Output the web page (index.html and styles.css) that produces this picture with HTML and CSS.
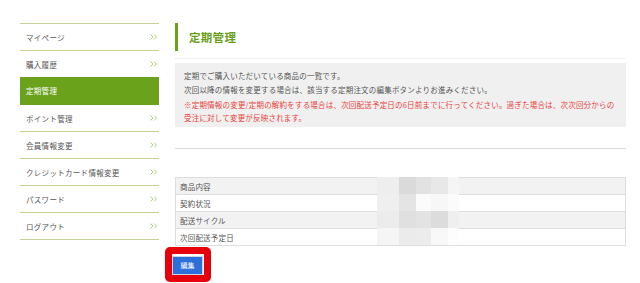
FILE: index.html
```html
<!DOCTYPE html>
<html lang="ja">
<head>
<meta charset="utf-8">
<title>定期管理</title>
<link rel="stylesheet" href="styles.css">
</head>
<body>
<div class="page">
  <nav class="side">
    <ul class="side-list">
      <li class="side-item"><span>マイページ</span><svg class="chev" viewBox="0 0 8 6" width="8" height="6"><path d="M0.5 0.5 L3 3 L0.5 5.5 M4 0.5 L6.5 3 L4 5.5" fill="none" stroke="#9cc35a" stroke-width="0.8"/></svg></li>
      <li class="side-item"><span>購入履歴</span><svg class="chev" viewBox="0 0 8 6" width="8" height="6"><path d="M0.5 0.5 L3 3 L0.5 5.5 M4 0.5 L6.5 3 L4 5.5" fill="none" stroke="#9cc35a" stroke-width="0.8"/></svg></li>
      <li class="side-item active"><span>定期管理</span></li>
      <li class="side-item"><span>ポイント管理</span><svg class="chev" viewBox="0 0 8 6" width="8" height="6"><path d="M0.5 0.5 L3 3 L0.5 5.5 M4 0.5 L6.5 3 L4 5.5" fill="none" stroke="#9cc35a" stroke-width="0.8"/></svg></li>
      <li class="side-item"><span>会員情報変更</span><svg class="chev" viewBox="0 0 8 6" width="8" height="6"><path d="M0.5 0.5 L3 3 L0.5 5.5 M4 0.5 L6.5 3 L4 5.5" fill="none" stroke="#9cc35a" stroke-width="0.8"/></svg></li>
      <li class="side-item"><span>クレジットカード情報変更</span><svg class="chev" viewBox="0 0 8 6" width="8" height="6"><path d="M0.5 0.5 L3 3 L0.5 5.5 M4 0.5 L6.5 3 L4 5.5" fill="none" stroke="#9cc35a" stroke-width="0.8"/></svg></li>
      <li class="side-item"><span>パスワード</span><svg class="chev" viewBox="0 0 8 6" width="8" height="6"><path d="M0.5 0.5 L3 3 L0.5 5.5 M4 0.5 L6.5 3 L4 5.5" fill="none" stroke="#9cc35a" stroke-width="0.8"/></svg></li>
      <li class="side-item"><span>ログアウト</span><svg class="chev" viewBox="0 0 8 6" width="8" height="6"><path d="M0.5 0.5 L3 3 L0.5 5.5 M4 0.5 L6.5 3 L4 5.5" fill="none" stroke="#9cc35a" stroke-width="0.8"/></svg></li>
    </ul>
  </nav>
  <main class="main">
    <div class="head-wrap">
      <h2 class="title">定期管理</h2>
    </div>
    <div class="notice">
      <p>定期でご購入いただいている商品の一覧です。</p>
      <p>次回以降の情報を変更する場合は、該当する定期注文の編集ボタンよりお進みください。</p>
      <p class="warn">※定期情報の変更/定期の解約をする場合は、次回配送予定日の6日前までに行ってください。過ぎた場合は、次次回分からの受注に対して変更が反映されます。</p>
    </div>
    <hr class="sep">
    <div class="table-wrap">
      <table class="info">
        <tr><td class="label">商品内容</td><td></td></tr>
        <tr><td class="label">契約状況</td><td></td></tr>
        <tr><td class="label">配送サイクル</td><td></td></tr>
        <tr><td class="label">次回配送予定日</td><td></td></tr>
      </table>
      <div class="mosaic">
        <i class="m1"></i><i class="m2"></i><i class="m3"></i><i class="m4"></i><i class="m5"></i>
        <i class="m6"></i><i class="m7"></i><i class="m8"></i><i class="m9"></i><i class="m10"></i>
        <i class="m11"></i><i class="m12"></i><i class="m13"></i><i class="m14"></i><i class="m15"></i>
        <i class="m16"></i><i class="m17"></i><i class="m18"></i><i class="m19"></i><i class="m20"></i>
      </div>
    </div>
    <div class="edit-row">
      <span class="edit-frame"><button class="edit-btn" type="button">編集</button></span>
    </div>
  </main>
</div>
</body>
</html>
```

FILE: styles.css
```css
* { box-sizing: border-box; }
html, body { margin: 0; padding: 0; background: #fff; }
body {
  font-family: "Noto Sans CJK JP", "Noto Sans", sans-serif;
  color: #555;
  font-size: 7.5px;
  overflow: hidden;
}
.page {
  display: flex;
  align-items: flex-start;
  width: 640px;
  height: 283px;
}
.side {
  width: 139px;
  margin: 23px 0 0 20px;
  flex: none;
}
.side-list {
  list-style: none;
  margin: 0;
  padding: 0;
  border-top: 1px solid #c4d29a;
}
.side-item {
  height: 27px;
  border-bottom: 1px solid #c4d29a;
  display: flex;
  align-items: center;
  justify-content: space-between;
  padding: 0 1px 0 6px;
  color: #555;
  font-size: 7.5px;
  letter-spacing: 0.3px;
}
.side-item.active {
  background: #6aa21b;
  border-bottom-color: #6aa21b;
  color: #fff;
  margin-top: -1px;
  height: 28px;
}
.chev { display: block; }
.main {
  flex: 1;
  padding: 23px 14px 0 16px;
}
.head-wrap {
  padding-bottom: 7px;
  border-bottom: 1px solid #f3f3f3;
}
.title {
  margin: 0;
  height: 28px;
  border-left: 3px solid #6aa21b;
  padding-left: 11px;
  display: flex;
  align-items: center;
  font-size: 11.5px;
  font-weight: bold;
  color: #6a9f1e;
  letter-spacing: 0.3px;
}
.notice {
  margin-top: 4px;
  background: #f0f0f0;
  padding: 6px 9px 3px 9px;
  height: 64px;
}
.notice p {
  margin: 0;
  line-height: 14px;
  letter-spacing: 0.2px;
}
.notice .warn {
  color: #e8413c;
  line-height: 13px;
  margin-top: 1px;
}
.sep {
  margin: 21px 0 0 0;
  border: 0;
  border-top: 1px solid #dcdcdc;
  height: 0;
}
.table-wrap {
  position: relative;
  margin-top: 28px;
}
.info {
  width: 100%;
  border-collapse: collapse;
}
.info td {
  height: 17px;
  padding: 0 4px;
  border-top: 1px solid #dedede;
  border-bottom: 1px solid #dedede;
  font-size: 7.5px;
  color: #555;
  letter-spacing: 0.2px;
}
.info td:first-child { border-left: 1px solid #dedede; }
.info td:last-child { border-right: 1px solid #dedede; }
.info .label { width: 202px; }
.info tr:nth-child(odd) td { background: #f2f2f2; }
.info tr:nth-child(even) td { background: #fff; }
.mosaic {
  position: absolute;
  left: 202px;
  top: 0;
  width: 82px;
  height: 68px;
  display: grid;
  grid-template-columns: 22px 17px 15px 17px 11px;
  grid-template-rows: 17px 17px 17px 17px;
}
.mosaic i { display: block; }
.m1 { background: #eeeeee; } .m2 { background: #dadada; } .m3 { background: #e2e2e2; } .m4 { background: #e8e8e8; } .m5 { background: #f5f5f5; }
.m6 { background: #efefef; } .m7 { background: #e4e4e4; } .m8 { background: #fbfbfb; } .m9 { background: #f7f7f7; } .m10 { background: #fbfbfb; }
.m11 { background: #ececec; } .m12 { background: #e0e0e0; } .m13 { background: #e3e3e3; } .m14 { background: #dcdcdc; } .m15 { background: #efefef; }
.m16 { background: #f5f5f5; } .m17 { background: #ebebeb; } .m18 { background: #ececec; } .m19 { background: #f8f8f8; } .m20 { background: #fdfdfd; }
.edit-row {
  padding-top: 11px;
  margin-left: -2px;
}
.edit-frame {
  position: relative;
  display: inline-block;
}
.edit-frame::before {
  content: "";
  position: absolute;
  top: -10px;
  left: -8px;
  right: -9px;
  bottom: -8px;
  border: 7px solid #e5000c;
  border-radius: 5px;
}
.edit-btn {
  display: block;
  width: 29px;
  height: 17px;
  padding: 0;
  border: 0;
  background: #2c6fd8;
  box-shadow: 0 0 0 1px #cfd6e2;
  color: #fff;
  font-family: "Noto Sans CJK JP", sans-serif;
  font-size: 7px;
  line-height: 17px;
  text-align: center;
}
```
